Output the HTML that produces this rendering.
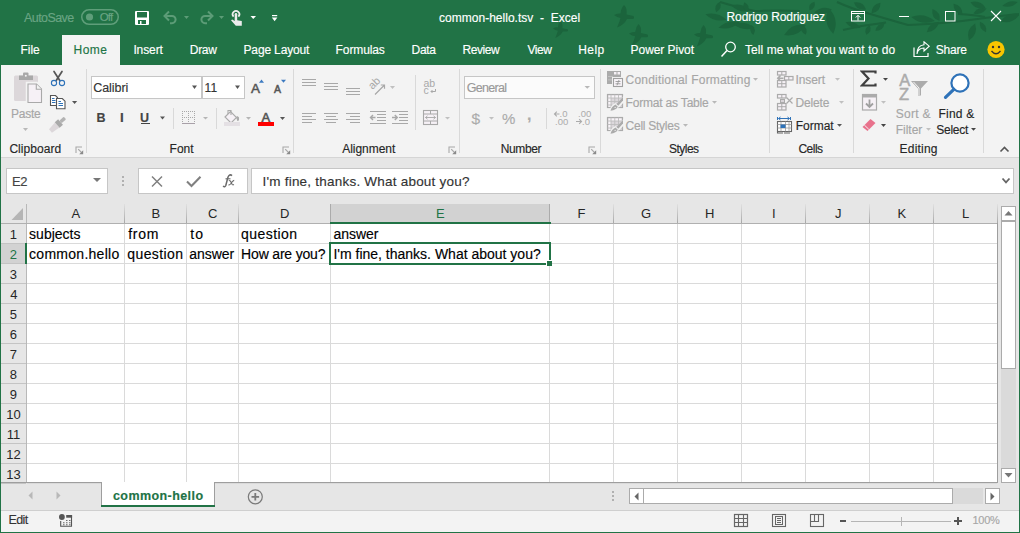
<!DOCTYPE html>
<html><head><meta charset="utf-8"><style>
html,body{margin:0;padding:0;width:1020px;height:533px;overflow:hidden;background:#fff;}
body{position:relative;font-family:"Liberation Sans",sans-serif;}
div,svg{position:absolute;}
.t{white-space:nowrap;-webkit-text-stroke:0.15px currentColor;}
</style></head><body>
<div style="left:0px;top:0px;width:1020px;height:65px;background:#217346;"></div>
<svg style="left:540px;top:0px;" width="479" height="65" viewBox="0 0 479 65"><path d="M0 10 Q3 8 6.5 8.5 Q7 3 10 0 Q13.5 3 12.5 9.5 L19.5 11 Q21 13.5 18.5 14 L13 14 Q10 20 3 22.5 Q5.5 17 6.5 13 Q3 12.5 0 10Z" transform="translate(74 5) scale(1.0)" fill="#1b643c"/><path d="M0 10 Q3 8 6.5 8.5 Q7 3 10 0 Q13.5 3 12.5 9.5 L19.5 11 Q21 13.5 18.5 14 L13 14 Q10 20 3 22.5 Q5.5 17 6.5 13 Q3 12.5 0 10Z" transform="translate(89 24) scale(0.95)" fill="#1b643c"/><path d="M0 10 Q3 8 6.5 8.5 Q7 3 10 0 Q13.5 3 12.5 9.5 L19.5 11 Q21 13.5 18.5 14 L13 14 Q10 20 3 22.5 Q5.5 17 6.5 13 Q3 12.5 0 10Z" transform="translate(154 25) scale(0.95)" fill="#1b643c"/><path d="M0 10 Q3 8 6.5 8.5 Q7 3 10 0 Q13.5 3 12.5 9.5 L19.5 11 Q21 13.5 18.5 14 L13 14 Q10 20 3 22.5 Q5.5 17 6.5 13 Q3 12.5 0 10Z" transform="translate(13 21) scale(0.75)" fill="#1b643c"/><path d="M 180.0 2.0 Q 200.0 8.0 215.0 11.0 Q 240.0 10.0 260.0 11.0" stroke="#1b643c" stroke-width="2" fill="none"/><path d="M 297.0 2.0 Q 310.0 8.0 327.0 13.0 Q 350.0 20.0 368.0 25.0 Q 390.0 24.0 402.0 23.0 Q 425.0 21.0 445.0 18.0 Q 460.0 16.0 479.0 14.0" stroke="#1b643c" stroke-width="2" fill="none"/><path d="M 303.0 30.0 Q 325.0 25.0 346.0 22.6" stroke="#1b643c" stroke-width="2" fill="none"/><path d="M 418.0 14.0 Q 435.0 15.0 445.0 17.0" stroke="#1b643c" stroke-width="2" fill="none"/><path d="M-11.0 0 Q0 -6 11.0 0 Q0 6 -11.0 0Z" transform="translate(176 17) rotate(15)" fill="#1b643c"/><path d="M-11.0 0 Q0 -6 11.0 0 Q0 6 -11.0 0Z" transform="translate(189 25) rotate(-15)" fill="#1b643c"/><path d="M-10.0 0 Q0 -6 10.0 0 Q0 6 -10.0 0Z" transform="translate(201 8) rotate(15)" fill="#1b643c"/><path d="M-5.5 0 Q0 -5 5.5 0 Q0 5 -5.5 0Z" transform="translate(178 7) rotate(-70)" fill="#1b643c"/><path d="M-5.0 0 Q0 -5 5.0 0 Q0 5 -5.0 0Z" transform="translate(206 7) rotate(70)" fill="#1b643c"/><path d="M-11.0 0 Q0 -6 11.0 0 Q0 6 -11.0 0Z" transform="translate(204 26) rotate(10)" fill="#1b643c"/><path d="M-5.0 0 Q0 -4.5 5.0 0 Q0 4.5 -5.0 0Z" transform="translate(212.5 30) rotate(80)" fill="#1b643c"/><path d="M-12.0 0 Q0 -8 12.0 0 Q0 8 -12.0 0Z" transform="translate(255 30) rotate(-25)" fill="#1b643c"/><path d="M-13.0 0 Q0 -9 13.0 0 Q0 9 -13.0 0Z" transform="translate(291 21) rotate(80)" fill="#1b643c"/><path d="M-9.0 0 Q0 -6 9.0 0 Q0 6 -9.0 0Z" transform="translate(283 11) rotate(-10)" fill="#1b643c"/><path d="M-5.0 0 Q0 -5 5.0 0 Q0 5 -5.0 0Z" transform="translate(272 6) rotate(-60)" fill="#1b643c"/><path d="M-7.0 0 Q0 -6 7.0 0 Q0 6 -7.0 0Z" transform="translate(320 6) rotate(30)" fill="#1b643c"/><path d="M-7.0 0 Q0 -6 7.0 0 Q0 6 -7.0 0Z" transform="translate(336 8) rotate(-50)" fill="#1b643c"/><path d="M-8.0 0 Q0 -5 8.0 0 Q0 5 -8.0 0Z" transform="translate(313 25) rotate(20)" fill="#1b643c"/><path d="M-5.0 0 Q0 -5 5.0 0 Q0 5 -5.0 0Z" transform="translate(328 30) rotate(-70)" fill="#1b643c"/><path d="M-6.0 0 Q0 -5 6.0 0 Q0 5 -6.0 0Z" transform="translate(340 27) rotate(-40)" fill="#1b643c"/><path d="M-5.0 0 Q0 -5 5.0 0 Q0 5 -5.0 0Z" transform="translate(264 30) rotate(70)" fill="#1b643c"/><path d="M-12.0 0 Q0 -7 12.0 0 Q0 7 -12.0 0Z" transform="translate(383 19) rotate(10)" fill="#1b643c"/><path d="M-7.0 0 Q0 -6 7.0 0 Q0 6 -7.0 0Z" transform="translate(396 15) rotate(60)" fill="#1b643c"/><path d="M-8.0 0 Q0 -6 8.0 0 Q0 6 -8.0 0Z" transform="translate(393 27) rotate(-40)" fill="#1b643c"/><path d="M-7.0 0 Q0 -6 7.0 0 Q0 6 -7.0 0Z" transform="translate(418 9) rotate(50)" fill="#1b643c"/><path d="M-9.0 0 Q0 -7 9.0 0 Q0 7 -9.0 0Z" transform="translate(432 32) rotate(-70)" fill="#1b643c"/><path d="M-6.0 0 Q0 -5 6.0 0 Q0 5 -6.0 0Z" transform="translate(443 27) rotate(60)" fill="#1b643c"/><path d="M-8.0 0 Q0 -6 8.0 0 Q0 6 -8.0 0Z" transform="translate(438 5) rotate(20)" fill="#1b643c"/><path d="M-7.0 0 Q0 -5 7.0 0 Q0 5 -7.0 0Z" transform="translate(440 11) rotate(-20)" fill="#1b643c"/><path d="M-8.0 0 Q0 -5 8.0 0 Q0 5 -8.0 0Z" transform="translate(470 4) rotate(-15)" fill="#1b643c"/><path d="M-10.0 0 Q0 -7 10.0 0 Q0 7 -10.0 0Z" transform="translate(470 18) rotate(-20)" fill="#1b643c"/></svg>
<div style="left:62px;top:35px;width:58px;height:30px;background:#f3f3f3;"></div>
<div style="left:1px;top:65px;width:1018px;height:92px;background:#f3f3f3;"></div>
<div style="left:1px;top:157px;width:1018px;height:1px;background:#d5d5d5;"></div>
<div style="left:1px;top:158px;width:1018px;height:325px;background:#e6e6e6;"></div>
<div style="left:1px;top:483px;width:1018px;height:27px;background:#e6e6e6;"></div>
<div style="left:1px;top:510px;width:1018px;height:1px;background:#cfcfcf;"></div>
<div style="left:1px;top:511px;width:1018px;height:21px;background:#f3f3f3;"></div>
<div style="left:0px;top:0px;width:1px;height:533px;background:#217346;"></div>
<div style="left:1019px;top:0px;width:1px;height:533px;background:#217346;"></div>
<div style="left:0px;top:532px;width:1020px;height:1px;background:#217346;"></div>
<div class="t" style="left:24.0px;top:12px;font-size:12.5px;line-height:12.5px;color:#6aa584;letter-spacing:-0.57px;">AutoSave</div>
<div class="t" style="left:99.8px;top:12px;font-size:11.5px;line-height:11.5px;color:#6aa584;letter-spacing:-0.90px;">Off</div>
<div class="t" style="left:439.0px;top:12px;font-size:12px;line-height:12px;color:#fff;letter-spacing:0.02px;">common-hello.tsv&nbsp;&nbsp;-&nbsp;&nbsp;Excel</div>
<div class="t" style="left:726.5px;top:11px;font-size:12px;line-height:12px;color:#fff;letter-spacing:-0.09px;">Rodrigo Rodriguez</div>
<div style="left:899px;top:16px;width:10px;height:1px;background:#fff;"></div>
<div class="t" style="left:20.4px;top:44px;font-size:12px;line-height:12px;color:#fff;">File</div>
<div class="t" style="left:73.5px;top:44px;font-size:12px;line-height:12px;color:#217346;letter-spacing:0.50px;">Home</div>
<div class="t" style="left:133.4px;top:44px;font-size:12px;line-height:12px;color:#fff;letter-spacing:-0.10px;">Insert</div>
<div class="t" style="left:189.8px;top:44px;font-size:12px;line-height:12px;color:#fff;letter-spacing:-0.33px;">Draw</div>
<div class="t" style="left:243.5px;top:44px;font-size:12px;line-height:12px;color:#fff;letter-spacing:-0.15px;">Page Layout</div>
<div class="t" style="left:335.6px;top:44px;font-size:12px;line-height:12px;color:#fff;letter-spacing:-0.11px;">Formulas</div>
<div class="t" style="left:411.6px;top:44px;font-size:12px;line-height:12px;color:#fff;letter-spacing:-0.33px;">Data</div>
<div class="t" style="left:462.4px;top:44px;font-size:12px;line-height:12px;color:#fff;letter-spacing:-0.40px;">Review</div>
<div class="t" style="left:527.5px;top:44px;font-size:12px;line-height:12px;color:#fff;letter-spacing:-0.50px;">View</div>
<div class="t" style="left:578.3px;top:44px;font-size:12px;line-height:12px;color:#fff;letter-spacing:0.40px;">Help</div>
<div class="t" style="left:630.6px;top:44px;font-size:12px;line-height:12px;color:#fff;letter-spacing:-0.06px;">Power Pivot</div>
<div class="t" style="left:745.0px;top:44px;font-size:12px;line-height:12px;color:#fff;letter-spacing:0.08px;">Tell me what you want to do</div>
<div class="t" style="left:935.8px;top:44px;font-size:12px;line-height:12px;color:#fff;letter-spacing:-0.25px;">Share</div>
<div style="left:86px;top:69px;width:1px;height:84px;background:#d9d9d9;"></div>
<div style="left:293px;top:69px;width:1px;height:84px;background:#d9d9d9;"></div>
<div style="left:459px;top:69px;width:1px;height:84px;background:#d9d9d9;"></div>
<div style="left:600px;top:69px;width:1px;height:84px;background:#d9d9d9;"></div>
<div style="left:769px;top:69px;width:1px;height:84px;background:#d9d9d9;"></div>
<div style="left:853px;top:69px;width:1px;height:84px;background:#d9d9d9;"></div>
<div style="left:983px;top:69px;width:1px;height:84px;background:#d9d9d9;"></div>
<div style="left:173px;top:108px;width:1px;height:21px;background:#d9d9d9;"></div>
<div style="left:216px;top:108px;width:1px;height:21px;background:#d9d9d9;"></div>
<div style="left:415px;top:75px;width:1px;height:55px;background:#d9d9d9;"></div>
<div style="left:546px;top:108px;width:1px;height:21px;background:#d9d9d9;"></div>
<div class="t" style="left:9.4px;top:143px;font-size:12px;line-height:12px;color:#262626;letter-spacing:0.05px;">Clipboard</div>
<div class="t" style="left:169.6px;top:143px;font-size:12px;line-height:12px;color:#262626;">Font</div>
<div class="t" style="left:342.3px;top:143px;font-size:12px;line-height:12px;color:#262626;letter-spacing:-0.05px;">Alignment</div>
<div class="t" style="left:500.8px;top:143px;font-size:12px;line-height:12px;color:#262626;letter-spacing:-0.40px;">Number</div>
<div class="t" style="left:669.0px;top:143px;font-size:12px;line-height:12px;color:#262626;letter-spacing:-0.52px;">Styles</div>
<div class="t" style="left:798.4px;top:143px;font-size:12px;line-height:12px;color:#262626;letter-spacing:-0.50px;">Cells</div>
<div class="t" style="left:899.6px;top:143px;font-size:12px;line-height:12px;color:#262626;letter-spacing:0.20px;">Editing</div>
<div class="t" style="left:11.0px;top:108px;font-size:12px;line-height:12px;color:#a6a6a6;letter-spacing:-0.25px;">Paste</div>
<div style="left:91px;top:76px;width:111px;height:23px;box-sizing:border-box;border:1px solid #c6c6c6;background:#fff;"></div>
<div style="left:202px;top:76px;width:43px;height:23px;box-sizing:border-box;border:1px solid #c6c6c6;background:#fff;"></div>
<div class="t" style="left:93.3px;top:82px;font-size:12.5px;line-height:12.5px;color:#333;letter-spacing:-0.08px;">Calibri</div>
<div class="t" style="left:204.6px;top:82px;font-size:12px;line-height:12px;color:#333;">11</div>
<div class="t" style="left:251.0px;top:82px;font-size:13.5px;line-height:13.5px;color:#555;-webkit-text-stroke:0.5px #555;">A</div>
<div class="t" style="left:274.0px;top:84px;font-size:10.5px;line-height:10.5px;color:#555;-webkit-text-stroke:0.5px #555;">A</div>
<div class="t" style="left:96.6px;top:112px;font-size:12.5px;line-height:12.5px;color:#444444;font-weight:700;">B</div>
<div class="t" style="left:120.0px;top:111px;font-size:13.5px;line-height:13.5px;color:#444444;font-weight:700;font-family:"Liberation Serif",sans-serif;font-style:italic;">I</div>
<div class="t" style="left:140.0px;top:112px;font-size:12.5px;line-height:12.5px;color:#444444;font-weight:700;">U</div>
<div style="left:141px;top:123px;width:9px;height:1px;background:#444444;"></div>
<div class="t" style="left:261.5px;top:111px;font-size:13px;line-height:13px;color:#555;-webkit-text-stroke:0.6px #555;">A</div>
<div style="left:258px;top:122px;width:16px;height:4px;background:#ff0000;"></div>
<div style="left:302px;top:79px;width:14px;height:1px;background:#a8a8a8;"></div>
<div style="left:302px;top:82px;width:14px;height:1px;background:#a8a8a8;"></div>
<div style="left:302px;top:85px;width:14px;height:1px;background:#a8a8a8;"></div>
<div style="left:324px;top:83px;width:14px;height:1px;background:#a8a8a8;"></div>
<div style="left:324px;top:86px;width:14px;height:1px;background:#a8a8a8;"></div>
<div style="left:324px;top:89px;width:14px;height:1px;background:#a8a8a8;"></div>
<div style="left:346px;top:88px;width:14px;height:1px;background:#a8a8a8;"></div>
<div style="left:346px;top:91px;width:14px;height:1px;background:#a8a8a8;"></div>
<div style="left:346px;top:94px;width:14px;height:1px;background:#a8a8a8;"></div>
<div style="left:302px;top:113px;width:14px;height:1px;background:#a8a8a8;"></div>
<div style="left:302px;top:116px;width:10px;height:1px;background:#a8a8a8;"></div>
<div style="left:302px;top:119px;width:14px;height:1px;background:#a8a8a8;"></div>
<div style="left:302px;top:122px;width:10px;height:1px;background:#a8a8a8;"></div>
<div style="left:324.0px;top:113px;width:14px;height:1px;background:#a8a8a8;"></div>
<div style="left:326.0px;top:116px;width:10px;height:1px;background:#a8a8a8;"></div>
<div style="left:324.0px;top:119px;width:14px;height:1px;background:#a8a8a8;"></div>
<div style="left:326.0px;top:122px;width:10px;height:1px;background:#a8a8a8;"></div>
<div style="left:346px;top:113px;width:14px;height:1px;background:#a8a8a8;"></div>
<div style="left:350px;top:116px;width:10px;height:1px;background:#a8a8a8;"></div>
<div style="left:346px;top:119px;width:14px;height:1px;background:#a8a8a8;"></div>
<div style="left:350px;top:122px;width:10px;height:1px;background:#a8a8a8;"></div>
<div style="left:464px;top:76px;width:131px;height:23px;box-sizing:border-box;border:1px solid #c6c6c6;background:#fbfbfb;"></div>
<div class="t" style="left:466.8px;top:82px;font-size:12.5px;line-height:12.5px;color:#999;letter-spacing:-0.72px;">General</div>
<div class="t" style="left:471.5px;top:111px;font-size:15.5px;line-height:15.5px;color:#ababab;">$</div>
<div class="t" style="left:502.0px;top:111px;font-size:15px;line-height:15px;color:#ababab;">%</div>
<div class="t" style="left:527.0px;top:107px;font-size:16px;line-height:16px;color:#ababab;font-weight:700;">&#x2c;</div>
<div class="t" style="left:625.6px;top:74px;font-size:12px;line-height:12px;color:#a6a6a6;letter-spacing:0.19px;">Conditional Formatting</div>
<div class="t" style="left:625.6px;top:97px;font-size:12px;line-height:12px;color:#a6a6a6;letter-spacing:-0.19px;">Format as Table</div>
<div class="t" style="left:625.6px;top:120px;font-size:12px;line-height:12px;color:#a6a6a6;letter-spacing:-0.26px;">Cell Styles</div>
<div class="t" style="left:795.4px;top:74px;font-size:12px;line-height:12px;color:#a6a6a6;letter-spacing:-0.08px;">Insert</div>
<div class="t" style="left:795.4px;top:97px;font-size:12px;line-height:12px;color:#a6a6a6;letter-spacing:-0.12px;">Delete</div>
<div class="t" style="left:795.7px;top:120px;font-size:12px;line-height:12px;color:#262626;">Format</div>
<div class="t" style="left:899.3px;top:72px;font-size:16.5px;line-height:16.5px;color:#ababab;-webkit-text-stroke:0.5px #ababab;">A</div>
<div class="t" style="left:898.9px;top:86px;font-size:16.5px;line-height:16.5px;color:#ababab;-webkit-text-stroke:0.5px #ababab;">Z</div>
<div class="t" style="left:895.7px;top:108px;font-size:12px;line-height:12px;color:#a6a6a6;letter-spacing:0.30px;">Sort &amp;</div>
<div class="t" style="left:895.7px;top:124px;font-size:12px;line-height:12px;color:#a6a6a6;">Filter</div>
<div class="t" style="left:938.4px;top:108px;font-size:12px;line-height:12px;color:#262626;letter-spacing:0.26px;">Find &amp;</div>
<div class="t" style="left:936.3px;top:124px;font-size:12px;line-height:12px;color:#262626;letter-spacing:-0.26px;">Select</div>
<div style="left:6px;top:168px;width:102px;height:26px;box-sizing:border-box;border:1px solid #c6c6c6;background:#fff;"></div>
<div class="t" style="left:12.0px;top:175px;font-size:13px;line-height:13px;color:#444;letter-spacing:-0.50px;">E2</div>
<div style="left:122px;top:176px;width:2px;height:2px;background:#b0b0b0;"></div>
<div style="left:122px;top:180px;width:2px;height:2px;background:#b0b0b0;"></div>
<div style="left:122px;top:184px;width:2px;height:2px;background:#b0b0b0;"></div>
<div style="left:138px;top:168px;width:110px;height:26px;box-sizing:border-box;border:1px solid #c6c6c6;background:#fff;"></div>
<div style="left:251px;top:168px;width:763px;height:26px;box-sizing:border-box;border:1px solid #c6c6c6;background:#fff;"></div>
<div class="t" style="left:262.5px;top:175px;font-size:13.5px;line-height:13.5px;color:#333;letter-spacing:0.22px;">I'm fine, thanks. What about you?</div>
<div style="left:27px;top:224px;width:970px;height:259px;background:#fff;"></div>
<div style="left:27px;top:243px;width:970px;height:1px;background:#dadada;"></div>
<div style="left:27px;top:263px;width:970px;height:1px;background:#dadada;"></div>
<div style="left:27px;top:283px;width:970px;height:1px;background:#dadada;"></div>
<div style="left:27px;top:303px;width:970px;height:1px;background:#dadada;"></div>
<div style="left:27px;top:323px;width:970px;height:1px;background:#dadada;"></div>
<div style="left:27px;top:343px;width:970px;height:1px;background:#dadada;"></div>
<div style="left:27px;top:363px;width:970px;height:1px;background:#dadada;"></div>
<div style="left:27px;top:383px;width:970px;height:1px;background:#dadada;"></div>
<div style="left:27px;top:403px;width:970px;height:1px;background:#dadada;"></div>
<div style="left:27px;top:423px;width:970px;height:1px;background:#dadada;"></div>
<div style="left:27px;top:443px;width:970px;height:1px;background:#dadada;"></div>
<div style="left:27px;top:463px;width:970px;height:1px;background:#dadada;"></div>
<div style="left:27px;top:483px;width:970px;height:1px;background:#dadada;"></div>
<div style="left:124px;top:224px;width:1px;height:259px;background:#dadada;"></div>
<div style="left:186px;top:224px;width:1px;height:259px;background:#dadada;"></div>
<div style="left:238px;top:224px;width:1px;height:259px;background:#dadada;"></div>
<div style="left:330px;top:224px;width:1px;height:259px;background:#dadada;"></div>
<div style="left:549px;top:224px;width:1px;height:259px;background:#dadada;"></div>
<div style="left:613px;top:224px;width:1px;height:259px;background:#dadada;"></div>
<div style="left:677px;top:224px;width:1px;height:259px;background:#dadada;"></div>
<div style="left:741px;top:224px;width:1px;height:259px;background:#dadada;"></div>
<div style="left:805px;top:224px;width:1px;height:259px;background:#dadada;"></div>
<div style="left:869px;top:224px;width:1px;height:259px;background:#dadada;"></div>
<div style="left:933px;top:224px;width:1px;height:259px;background:#dadada;"></div>
<div style="left:124px;top:204px;width:1px;height:19px;background:linear-gradient(#e0e0e0,#a8a8a8);"></div>
<div style="left:186px;top:204px;width:1px;height:19px;background:linear-gradient(#e0e0e0,#a8a8a8);"></div>
<div style="left:238px;top:204px;width:1px;height:19px;background:linear-gradient(#e0e0e0,#a8a8a8);"></div>
<div style="left:330px;top:204px;width:1px;height:19px;background:linear-gradient(#e0e0e0,#a8a8a8);"></div>
<div style="left:549px;top:204px;width:1px;height:19px;background:linear-gradient(#e0e0e0,#a8a8a8);"></div>
<div style="left:613px;top:204px;width:1px;height:19px;background:linear-gradient(#e0e0e0,#a8a8a8);"></div>
<div style="left:677px;top:204px;width:1px;height:19px;background:linear-gradient(#e0e0e0,#a8a8a8);"></div>
<div style="left:741px;top:204px;width:1px;height:19px;background:linear-gradient(#e0e0e0,#a8a8a8);"></div>
<div style="left:805px;top:204px;width:1px;height:19px;background:linear-gradient(#e0e0e0,#a8a8a8);"></div>
<div style="left:869px;top:204px;width:1px;height:19px;background:linear-gradient(#e0e0e0,#a8a8a8);"></div>
<div style="left:933px;top:204px;width:1px;height:19px;background:linear-gradient(#e0e0e0,#a8a8a8);"></div>
<div style="left:997px;top:204px;width:1px;height:19px;background:linear-gradient(#e0e0e0,#a8a8a8);"></div>
<div style="left:26px;top:204px;width:1px;height:279px;background:#b8b8b8;"></div>
<div style="left:1px;top:223px;width:997px;height:1px;background:#b0b0b0;"></div>
<div style="left:997px;top:223px;width:1px;height:260px;background:#9e9e9e;"></div>
<div style="left:1px;top:482px;width:101px;height:1px;background:#9e9e9e;"></div>
<div style="left:214px;top:482px;width:784px;height:1px;background:#9e9e9e;"></div>
<div style="left:1px;top:243px;width:25px;height:1px;background:#c4c4c4;"></div>
<div style="left:1px;top:263px;width:25px;height:1px;background:#c4c4c4;"></div>
<div style="left:1px;top:283px;width:25px;height:1px;background:#c4c4c4;"></div>
<div style="left:1px;top:303px;width:25px;height:1px;background:#c4c4c4;"></div>
<div style="left:1px;top:323px;width:25px;height:1px;background:#c4c4c4;"></div>
<div style="left:1px;top:343px;width:25px;height:1px;background:#c4c4c4;"></div>
<div style="left:1px;top:363px;width:25px;height:1px;background:#c4c4c4;"></div>
<div style="left:1px;top:383px;width:25px;height:1px;background:#c4c4c4;"></div>
<div style="left:1px;top:403px;width:25px;height:1px;background:#c4c4c4;"></div>
<div style="left:1px;top:423px;width:25px;height:1px;background:#c4c4c4;"></div>
<div style="left:1px;top:443px;width:25px;height:1px;background:#c4c4c4;"></div>
<div style="left:1px;top:463px;width:25px;height:1px;background:#c4c4c4;"></div>
<div style="left:1px;top:483px;width:25px;height:1px;background:#c4c4c4;"></div>
<div style="left:331px;top:204px;width:218px;height:18px;background:#d2d2d2;"></div>
<div style="left:330px;top:204px;width:1px;height:18px;background:#ababab;"></div>
<div style="left:549px;top:204px;width:1px;height:18px;background:#ababab;"></div>
<div style="left:330px;top:222px;width:221px;height:2px;background:#217346;"></div>
<div style="left:1px;top:244px;width:25px;height:19px;background:#d2d2d2;"></div>
<div style="left:25px;top:243px;width:2px;height:21px;background:#217346;"></div>
<div class="t" style="left:71.6px;top:207px;font-size:13px;line-height:13px;color:#262626;-webkit-text-stroke:0;">A</div>
<div class="t" style="left:151.6px;top:207px;font-size:13px;line-height:13px;color:#262626;-webkit-text-stroke:0;">B</div>
<div class="t" style="left:208.1px;top:207px;font-size:13px;line-height:13px;color:#262626;-webkit-text-stroke:0;">C</div>
<div class="t" style="left:280.1px;top:207px;font-size:13px;line-height:13px;color:#262626;-webkit-text-stroke:0;">D</div>
<div class="t" style="left:436.1px;top:207px;font-size:13px;line-height:13px;color:#217346;-webkit-text-stroke:0;">E</div>
<div class="t" style="left:577.6px;top:207px;font-size:13px;line-height:13px;color:#262626;-webkit-text-stroke:0;">F</div>
<div class="t" style="left:641.1px;top:207px;font-size:13px;line-height:13px;color:#262626;-webkit-text-stroke:0;">G</div>
<div class="t" style="left:705.1px;top:207px;font-size:13px;line-height:13px;color:#262626;-webkit-text-stroke:0;">H</div>
<div class="t" style="left:772.1px;top:207px;font-size:13px;line-height:13px;color:#262626;-webkit-text-stroke:0;">I</div>
<div class="t" style="left:835.1px;top:207px;font-size:13px;line-height:13px;color:#262626;-webkit-text-stroke:0;">J</div>
<div class="t" style="left:897.6px;top:207px;font-size:13px;line-height:13px;color:#262626;-webkit-text-stroke:0;">K</div>
<div class="t" style="left:962.1px;top:207px;font-size:13px;line-height:13px;color:#262626;-webkit-text-stroke:0;">L</div>
<div class="t" style="left:9.8px;top:228px;font-size:13px;line-height:13px;color:#262626;-webkit-text-stroke:0;">1</div>
<div class="t" style="left:9.8px;top:248px;font-size:13px;line-height:13px;color:#217346;-webkit-text-stroke:0;">2</div>
<div class="t" style="left:9.8px;top:268px;font-size:13px;line-height:13px;color:#262626;-webkit-text-stroke:0;">3</div>
<div class="t" style="left:10.3px;top:288px;font-size:13px;line-height:13px;color:#262626;-webkit-text-stroke:0;">4</div>
<div class="t" style="left:9.8px;top:308px;font-size:13px;line-height:13px;color:#262626;-webkit-text-stroke:0;">5</div>
<div class="t" style="left:9.8px;top:328px;font-size:13px;line-height:13px;color:#262626;-webkit-text-stroke:0;">6</div>
<div class="t" style="left:9.8px;top:348px;font-size:13px;line-height:13px;color:#262626;-webkit-text-stroke:0;">7</div>
<div class="t" style="left:9.8px;top:368px;font-size:13px;line-height:13px;color:#262626;-webkit-text-stroke:0;">8</div>
<div class="t" style="left:9.8px;top:388px;font-size:13px;line-height:13px;color:#262626;-webkit-text-stroke:0;">9</div>
<div class="t" style="left:6.3px;top:408px;font-size:13px;line-height:13px;color:#262626;-webkit-text-stroke:0;">10</div>
<div class="t" style="left:6.8px;top:428px;font-size:13px;line-height:13px;color:#262626;-webkit-text-stroke:0;">11</div>
<div class="t" style="left:6.3px;top:448px;font-size:13px;line-height:13px;color:#262626;-webkit-text-stroke:0;">12</div>
<div class="t" style="left:6.3px;top:468px;font-size:13px;line-height:13px;color:#262626;-webkit-text-stroke:0;">13</div>
<div class="t" style="left:29.1px;top:227px;font-size:14px;line-height:14px;color:#000;">subjects</div>
<div class="t" style="left:128.3px;top:227px;font-size:14px;line-height:14px;color:#000;letter-spacing:0.67px;">from</div>
<div class="t" style="left:190.2px;top:227px;font-size:14px;line-height:14px;color:#000;letter-spacing:1.20px;">to</div>
<div class="t" style="left:241.1px;top:227px;font-size:14px;line-height:14px;color:#000;letter-spacing:0.43px;">question</div>
<div class="t" style="left:333.4px;top:227px;font-size:14px;line-height:14px;color:#000;">answer</div>
<div class="t" style="left:29.1px;top:247px;font-size:14px;line-height:14px;color:#000;letter-spacing:0.27px;">common.hello</div>
<div class="t" style="left:127.3px;top:247px;font-size:14px;line-height:14px;color:#000;letter-spacing:0.40px;">question</div>
<div class="t" style="left:189.2px;top:247px;font-size:14px;line-height:14px;color:#000;letter-spacing:-0.02px;">answer</div>
<div class="t" style="left:241.1px;top:247px;font-size:14px;line-height:14px;color:#000;letter-spacing:-0.18px;">How are you?</div>
<div class="t" style="left:333.4px;top:247px;font-size:14px;line-height:14px;color:#000;">I'm fine, thanks. What about you?</div>
<div style="left:329px;top:242px;width:222px;height:23px;box-sizing:border-box;border:2px solid #217346;background:transparent;"></div>
<div style="left:546px;top:260px;width:6px;height:6px;background:#fff;"></div>
<div style="left:547px;top:261px;width:5px;height:5px;background:#217346;"></div>
<div style="left:998px;top:204px;width:21px;height:279px;background:#e6e6e6;"></div>
<div style="left:1001px;top:221px;width:15px;height:247px;background:#dadada;"></div>
<div style="left:1001px;top:206px;width:15px;height:15px;box-sizing:border-box;border:1px solid #ababab;background:#fff;"></div>
<div style="left:1001px;top:221px;width:15px;height:148px;box-sizing:border-box;border:1px solid #ababab;background:#fff;"></div>
<div style="left:1001px;top:468px;width:15px;height:15px;box-sizing:border-box;border:1px solid #ababab;background:#fff;"></div>
<div style="left:101px;top:482px;width:1px;height:25px;background:#9e9e9e;"></div>
<div style="left:214px;top:482px;width:1px;height:25px;background:#9e9e9e;"></div>
<div style="left:102px;top:482px;width:112px;height:23px;background:#fff;"></div>
<div style="left:101px;top:505px;width:114px;height:2px;background:#217346;"></div>
<div class="t" style="left:113.0px;top:490px;font-size:12.5px;line-height:12.5px;color:#217346;font-weight:700;letter-spacing:0.42px;">common-hello</div>
<div style="left:612px;top:491px;width:2px;height:2px;background:#b0b0b0;"></div>
<div style="left:612px;top:495px;width:2px;height:2px;background:#b0b0b0;"></div>
<div style="left:612px;top:499px;width:2px;height:2px;background:#b0b0b0;"></div>
<div style="left:644px;top:488px;width:339px;height:16px;background:#dadada;"></div>
<div style="left:629px;top:488px;width:15px;height:16px;box-sizing:border-box;border:1px solid #ababab;background:#fff;"></div>
<div style="left:643px;top:488px;width:310px;height:16px;box-sizing:border-box;border:1px solid #ababab;background:#fff;"></div>
<div style="left:985px;top:488px;width:15px;height:16px;box-sizing:border-box;border:1px solid #ababab;background:#fff;"></div>
<div class="t" style="left:8.6px;top:514px;font-size:12.5px;line-height:12.5px;color:#333;letter-spacing:-0.67px;">Edit</div>
<div style="left:840px;top:520px;width:6px;height:2px;background:#555;"></div>
<div style="left:851px;top:521px;width:100px;height:1px;background:#b5b5b5;"></div>
<div style="left:901px;top:517px;width:1px;height:9px;background:#b5b5b5;"></div>
<div style="left:954px;top:520px;width:8px;height:2px;background:#555;"></div>
<div style="left:957px;top:517px;width:2px;height:8px;background:#555;"></div>
<div class="t" style="left:972.5px;top:515px;font-size:11px;line-height:11px;color:#a6a6a6;letter-spacing:-0.27px;">100%</div>
<svg style="left:81px;top:9px" width="38" height="16"><rect x="0.75" y="0.75" width="36.5" height="14.5" rx="7.25" fill="none" stroke="#5f9e7a" stroke-width="1.5"/><circle cx="8.5" cy="8" r="3.6" fill="#5f9e7a"/></svg>
<svg style="left:134px;top:10px" width="16" height="16"><rect x="1" y="1" width="14" height="14" rx="1" fill="#fff"/><rect x="3" y="2" width="10" height="5.5" fill="#217346"/><rect x="4" y="10" width="8" height="4" fill="#217346"/><rect x="6" y="11" width="1.5" height="3" fill="#fff"/></svg>
<svg style="left:162px;top:9px" width="30" height="18"><path d="M3 7 H10 A3.6 3.6 0 0 1 10 14.2 H8" fill="none" stroke="#5c9c77" stroke-width="2"/><path d="M7 2.5 L2.5 7 L7 11.5" fill="none" stroke="#5c9c77" stroke-width="2"/><polygon points="22,7 27,7 24.5,10" fill="#5c9c77"/></svg>
<svg style="left:197px;top:9px" width="30" height="18"><path d="M15 7 H8 A3.6 3.6 0 0 0 8 14.2 H10" fill="none" stroke="#5c9c77" stroke-width="2"/><path d="M11 2.5 L15.5 7 L11 11.5" fill="none" stroke="#5c9c77" stroke-width="2"/><polygon points="22,7 27,7 24.5,10" fill="#5c9c77"/></svg>
<svg style="left:229px;top:9px" width="30" height="18"><path d="M4.6 7.6 A3.3 3.3 0 1 1 9.4 7.6" fill="none" stroke="#ececec" stroke-width="1.8"/><rect x="5.7" y="4" width="2.5" height="9" rx="1.2" fill="#ececec"/><polygon points="2,11.2 3.2,10.6 5.7,12 8,11.2 12.8,12 12.8,16.8 6.8,16.8" fill="#ececec"/><polygon points="21.5,7 27,7 24.25,10" fill="#fff"/></svg>
<svg style="left:270px;top:13px" width="9" height="10"><rect x="2" y="2" width="5.2" height="1.2" fill="#fff"/><polygon points="1.8,4.5 7.4,4.5 4.6000000000000005,8.2" fill="#fff"/></svg>
<svg style="left:850px;top:10px" width="16" height="12"><rect x="1.5" y="1.5" width="13" height="9.5" fill="none" stroke="#fff" stroke-width="1"/><line x1="1.5" y1="3.5" x2="14.5" y2="3.5" stroke="#fff"/><path d="M8 10.5 V5.5 M5.8 7.5 L8 5.3 L10.2 7.5" stroke="#fff" fill="none"/></svg>
<svg style="left:944px;top:10px" width="12" height="12"><rect x="1.5" y="1.5" width="9.5" height="9.5" fill="none" stroke="#fff"/></svg>
<svg style="left:990px;top:10px" width="12" height="12"><path d="M1 1 L11 11 M11 1 L1 11" stroke="#fff" stroke-width="1.1"/></svg>
<svg style="left:720px;top:41px" width="17" height="17"><circle cx="10.5" cy="6" r="4.8" fill="none" stroke="#fff" stroke-width="1.3"/><line x1="7" y1="9.5" x2="1.5" y2="15.5" stroke="#fff" stroke-width="1.5"/></svg>
<svg style="left:912px;top:41px" width="19" height="17"><path d="M2 6.5 V15.5 H16 V12" fill="none" stroke="#fff" stroke-width="1.2"/><path d="M5 13 Q6 7 12 7 V10 L17.2 5.2 L12 0.8 V3.8 Q5 4.5 5 13 Z" fill="none" stroke="#fff" stroke-width="1.1"/></svg>
<svg style="left:986px;top:40px" width="20" height="19"><circle cx="10" cy="9.5" r="8.6" fill="#f8c500"/><circle cx="7" cy="7" r="1.2" fill="#333"/><circle cx="13" cy="7" r="1.2" fill="#333"/><path d="M5.5 11 Q10 16.5 14.5 11" fill="none" stroke="#333" stroke-width="1.3"/></svg>
<svg style="left:75px;top:145.5px" width="9" height="9"><path d="M1 7 V1 H7" fill="none" stroke="#a8a8a8" stroke-width="1.1"/><path d="M3.2 3.2 L6.5 6.5" stroke="#a8a8a8" stroke-width="1.1"/><polygon points="8.2,4.2 8.2,8.2 4.2,8.2" fill="#8a8a8a"/></svg>
<svg style="left:282px;top:145.5px" width="9" height="9"><path d="M1 7 V1 H7" fill="none" stroke="#a8a8a8" stroke-width="1.1"/><path d="M3.2 3.2 L6.5 6.5" stroke="#a8a8a8" stroke-width="1.1"/><polygon points="8.2,4.2 8.2,8.2 4.2,8.2" fill="#8a8a8a"/></svg>
<svg style="left:448px;top:145.5px" width="9" height="9"><path d="M1 7 V1 H7" fill="none" stroke="#a8a8a8" stroke-width="1.1"/><path d="M3.2 3.2 L6.5 6.5" stroke="#a8a8a8" stroke-width="1.1"/><polygon points="8.2,4.2 8.2,8.2 4.2,8.2" fill="#8a8a8a"/></svg>
<svg style="left:588px;top:145.5px" width="9" height="9"><path d="M1 7 V1 H7" fill="none" stroke="#a8a8a8" stroke-width="1.1"/><path d="M3.2 3.2 L6.5 6.5" stroke="#a8a8a8" stroke-width="1.1"/><polygon points="8.2,4.2 8.2,8.2 4.2,8.2" fill="#8a8a8a"/></svg>
<svg style="left:12px;top:71px" width="32" height="34">
<rect x="2" y="4.5" width="24" height="25.5" rx="1.5" fill="#dcd7da"/>
<rect x="7" y="4.5" width="14" height="4.5" fill="#a9a9a9"/>
<rect x="11" y="1.5" width="5.5" height="4" rx="1" fill="#a9a9a9"/><circle cx="13.8" cy="4.8" r="1" fill="#f3f3f3"/>
<path d="M15 12 H24.8 L30.5 17.8 V32.5 H15 Z" fill="#f3f3f3" stroke="#f3f3f3" stroke-width="2.5"/>
<path d="M16 13 H24.5 L29.5 18 V31.5 H16 Z" fill="#f6f1f6" stroke="#a9a9a9" stroke-width="1.1"/>
<path d="M24.3 13 V18.2 H29.5" fill="#f3f3f3" stroke="#a9a9a9" stroke-width="1.1"/>
</svg>
<svg style="left:22px;top:127px" width="8" height="5"><polygon points="1,1 6,1 3.5,4" fill="#b8b8b8"/></svg>
<svg style="left:49px;top:69px" width="18" height="19">
<path d="M5 2.5 L10.8 11.5 M13 2.5 L7.2 11.5" stroke="#555" stroke-width="1.7" stroke-linecap="round"/>
<circle cx="5" cy="14" r="2.6" fill="#f3f3f3" stroke="#2e72b8" stroke-width="1.1"/>
<circle cx="13" cy="14" r="2.6" fill="#f3f3f3" stroke="#2e72b8" stroke-width="1.1"/>
</svg>
<svg style="left:49px;top:94px" width="18" height="16">
<path d="M1.5 1.5 H6.5 L8.5 3.5 V11.5 H1.5 Z" fill="#fff" stroke="#555" stroke-width="1.1"/>
<path d="M3 4.5 H5.5 M3 6.5 H6.5 M3 8.5 H6.5" stroke="#2e72b8" stroke-width="1"/>
<path d="M7.5 4.5 H13.3 L16 7.2 V14.8 H7.5 Z" fill="#fff" stroke="#555" stroke-width="1.1"/>
<path d="M9.5 7.5 H12 M9.5 9.5 H14 M9.5 11.5 H14" stroke="#2e72b8" stroke-width="1"/>
</svg>
<svg style="left:71px;top:100px" width="8" height="5"><polygon points="1,1 6.2,1 3.6,4" fill="#555"/></svg>
<svg style="left:48px;top:114px" width="20" height="20">
<g transform="translate(2.5 17) rotate(-42)">
<polygon points="0,-2.2 9,-3.4 9,3.4 0,2.2" fill="#dcd7da"/>
<rect x="9" y="-3.6" width="4.5" height="7.2" fill="#a9a9a9"/>
<rect x="13.5" y="-1.7" width="6" height="3.4" rx="1" fill="#b3b3b3"/>
</g>
</svg>
<svg style="left:191px;top:85px" width="8" height="5"><polygon points="1,0.5 6,0.5 3.5,4" fill="#555"/></svg>
<svg style="left:234px;top:85px" width="8" height="5"><polygon points="1,0.5 6,0.5 3.5,4" fill="#555"/></svg>
<svg style="left:258px;top:79px" width="8" height="5"><polygon points="1,3.8 6,3.8 3.5,0.5" fill="#3c7ac0"/></svg>
<svg style="left:280px;top:79px" width="8" height="5"><polygon points="1,0.8 6,0.8 3.5,3.8" fill="#3c7ac0"/></svg>
<svg style="left:159px;top:116px" width="8" height="5"><polygon points="1,0.5 6,0.5 3.5,3.5" fill="#555"/></svg>
<svg style="left:182px;top:111px" width="14" height="14"><rect x="0" y="0" width="1" height="1" fill="#a8a8a8"/><rect x="2" y="0" width="1" height="1" fill="#a8a8a8"/><rect x="4" y="0" width="1" height="1" fill="#a8a8a8"/><rect x="6" y="0" width="1" height="1" fill="#a8a8a8"/><rect x="8" y="0" width="1" height="1" fill="#a8a8a8"/><rect x="10" y="0" width="1" height="1" fill="#a8a8a8"/><rect x="12" y="0" width="1" height="1" fill="#a8a8a8"/><rect x="0" y="2" width="1" height="1" fill="#a8a8a8"/><rect x="6" y="2" width="1" height="1" fill="#a8a8a8"/><rect x="12" y="2" width="1" height="1" fill="#a8a8a8"/><rect x="0" y="4" width="1" height="1" fill="#a8a8a8"/><rect x="6" y="4" width="1" height="1" fill="#a8a8a8"/><rect x="12" y="4" width="1" height="1" fill="#a8a8a8"/><rect x="0" y="6" width="1" height="1" fill="#a8a8a8"/><rect x="2" y="6" width="1" height="1" fill="#a8a8a8"/><rect x="4" y="6" width="1" height="1" fill="#a8a8a8"/><rect x="6" y="6" width="1" height="1" fill="#a8a8a8"/><rect x="8" y="6" width="1" height="1" fill="#a8a8a8"/><rect x="10" y="6" width="1" height="1" fill="#a8a8a8"/><rect x="12" y="6" width="1" height="1" fill="#a8a8a8"/><rect x="0" y="8" width="1" height="1" fill="#a8a8a8"/><rect x="6" y="8" width="1" height="1" fill="#a8a8a8"/><rect x="12" y="8" width="1" height="1" fill="#a8a8a8"/><rect x="0" y="10" width="1" height="1" fill="#a8a8a8"/><rect x="6" y="10" width="1" height="1" fill="#a8a8a8"/><rect x="12" y="10" width="1" height="1" fill="#a8a8a8"/><rect x="0" y="12" width="13" height="1" fill="#a8a0a8"/></svg>
<svg style="left:202px;top:116px" width="8" height="5"><polygon points="1,1 6,1 3.5,3.5" fill="#b5b5b5"/></svg>
<svg style="left:223px;top:109px" width="19" height="18">
<path d="M2 8 L7.5 2.5 L13.5 8.5 L8 14 Z" fill="#f6f1f6" stroke="#ababab" stroke-width="1.1"/>
<path d="M5 5 V1.5 H8 V6" fill="none" stroke="#ababab" stroke-width="1.1"/>
<path d="M13 8.5 Q16 6 15.5 11 L14.5 12" fill="#ababab" stroke="#ababab"/>
<rect x="1" y="13" width="16" height="4" fill="#e4e0e4"/>
</svg>
<svg style="left:245px;top:116px" width="8" height="5"><polygon points="1,1 6,1 3.5,3.8" fill="#b5b5b5"/></svg>
<svg style="left:279px;top:116px" width="8" height="5"><polygon points="1,1 6,1 3.5,4" fill="#555"/></svg>
<svg style="left:369px;top:77px" width="28" height="19">
<text x="0" y="0" transform="translate(3.5 13) rotate(-45)" font-family="Liberation Sans" font-size="11" fill="#a8a8a8">ab</text>
<path d="M6 17.5 L15.5 8 M11.8 8 H15.5 V11.7" fill="none" stroke="#a8a8a8" stroke-width="1.2"/>
<polygon points="21,9 26,9 23.5,12" fill="#c0c0c0"/>
</svg>
<svg style="left:369px;top:110px" width="18" height="15">
<rect x="1" y="1" width="16" height="1" fill="#a8a8a8"/><rect x="8" y="4" width="9" height="1" fill="#a8a8a8"/><rect x="8" y="7" width="9" height="1" fill="#a8a8a8"/><rect x="8" y="10" width="9" height="1" fill="#a8a8a8"/><rect x="1" y="13" width="16" height="1" fill="#a8a8a8"/>
<path d="M6.5 7.5 H1.5 M4 5 L1.5 7.5 L4 10" fill="none" stroke="#a8a8a8" stroke-width="1.4"/>
</svg>
<svg style="left:391px;top:110px" width="18" height="15">
<rect x="1" y="1" width="16" height="1" fill="#a8a8a8"/><rect x="8" y="4" width="9" height="1" fill="#a8a8a8"/><rect x="8" y="7" width="9" height="1" fill="#a8a8a8"/><rect x="8" y="10" width="9" height="1" fill="#a8a8a8"/><rect x="1" y="13" width="16" height="1" fill="#a8a8a8"/>
<path d="M1 7.5 H6 M3.8 5 L6.3 7.5 L3.8 10" fill="none" stroke="#a8a8a8" stroke-width="1.4"/>
</svg>
<svg style="left:422px;top:78px" width="18" height="18">
<text x="1.5" y="8.5" font-family="Liberation Sans" font-size="10.5" fill="#a8a8a8">ab</text>
<text x="1.5" y="16" font-family="Liberation Sans" font-size="10.5" fill="#a8a8a8">c</text>
<path d="M13.5 11 V13.5 H9 M10.5 12 L9 13.5 L10.5 15" fill="none" stroke="#a8a8a8" stroke-width="1"/>
</svg>
<svg style="left:422px;top:109px" width="30" height="17">
<rect x="1.5" y="1.5" width="14" height="14" fill="#f6f1f6" stroke="#a8a8a8" stroke-width="1.1"/>
<path d="M1.5 5 H15.5 M1.5 12 H15.5 M8.5 1.5 V5 M8.5 12 V15.5" stroke="#a8a8a8" stroke-width="1"/>
<path d="M3.5 8.5 H13.5 M5.5 6.8 L3.5 8.5 L5.5 10.2 M11.5 6.8 L13.5 8.5 L11.5 10.2" fill="none" stroke="#a8a8a8" stroke-width="0.9"/>
<polygon points="23,8 28,8 25.5,10.5" fill="#c0c0c0"/>
</svg>
<svg style="left:584px;top:85px" width="8" height="5"><polygon points="0.5,1 6,1 3.25,3.8" fill="#b8b8b8"/></svg>
<svg style="left:488px;top:116px" width="8" height="5"><polygon points="1,1 6,1 3.5,3.8" fill="#c0c0c0"/></svg>
<svg style="left:553px;top:109px" width="40" height="17">
<text x="6.5" y="8" font-family="Liberation Sans" font-size="9.5" fill="#ababab">.0</text>
<text x="2" y="15.5" font-family="Liberation Sans" font-size="9.5" fill="#ababab">.00</text>
<path d="M1.5 5 H6.5 M3.8 2.7 L1.5 5 L3.8 7.3" fill="none" stroke="#ababab" stroke-width="1.1"/>
<text x="25" y="8" font-family="Liberation Sans" font-size="9.5" fill="#ababab">.00</text>
<text x="29" y="15.5" font-family="Liberation Sans" font-size="9.5" fill="#ababab">.0</text>
<path d="M23 12.5 H28.5 M26.2 10.2 L28.5 12.5 L26.2 14.8" fill="none" stroke="#ababab" stroke-width="1.1"/>
</svg>
<svg style="left:606px;top:70px" width="19" height="18">
<rect x="1" y="1" width="14" height="13" fill="#ababab"/>
<rect x="8" y="2" width="2.5" height="2.5" fill="#f6f1f6"/><rect x="11.5" y="2" width="2.5" height="2.5" fill="#f6f1f6"/>
<rect x="2" y="6" width="5" height="0.8" fill="#c8c8c8"/><rect x="2" y="9.5" width="5" height="0.8" fill="#c8c8c8"/>
<rect x="6" y="7" width="12" height="11" fill="#f3f3f3"/>
<rect x="7.5" y="8.5" width="9" height="8" fill="#f8f4f8" stroke="#a0a0a0" stroke-width="1.1"/>
<path d="M9.5 11.5 H14.5 M9.5 13.8 H14.5 M13 10 L11 15.3" stroke="#999" stroke-width="0.9"/>
</svg>
<svg style="left:606px;top:93px" width="19" height="19">
<rect x="1.5" y="1.5" width="15" height="13" fill="#dcd8dc" stroke="#ababab" stroke-width="1.2"/>
<rect x="2.5" y="2.5" width="13" height="2.5" fill="#f8f4f8"/>
<rect x="2.5" y="5" width="2.5" height="9" fill="#f8f4f8"/>
<path d="M1.5 5 H16.5 M1.5 8.5 H16.5 M1.5 12 H16.5 M5 1.5 V14.5 M8.8 1.5 V14.5 M12.5 1.5 V14.5" stroke="#bdbdbd" stroke-width="0.9"/>
<path d="M3 18.5 Q4.5 12 9.5 10 L13 13.5 Q11 18 3 18.5 Z" fill="#f3f3f3"/>
<path d="M17.5 3 L19 3 L19 8 L13 14.5 L11 12.5 Z" fill="#f3f3f3"/>
<path d="M4.5 17.8 Q5.5 13.5 9.5 11.5 L11.8 13.8 Q10.5 17 4.5 17.8 Z" fill="#ababab"/>
<path d="M10.5 11 L17 4 L17 7.5 L12.3 12.8 Z" fill="#ababab"/>
<path d="M8.5 14.5 Q9.5 13.8 10 15" stroke="#f3f3f3" stroke-width="0.8" fill="none"/>
</svg>
<svg style="left:606px;top:116px" width="19" height="19">
<rect x="1.5" y="1.5" width="15" height="13" fill="#dcd8dc" stroke="#ababab" stroke-width="1.2"/>
<rect x="2.5" y="2.5" width="13" height="2.5" fill="#f8f4f8"/>
<rect x="2.5" y="5" width="2.5" height="9" fill="#f8f4f8"/>
<path d="M1.5 5 H16.5 M1.5 8.5 H16.5 M1.5 12 H16.5 M5 1.5 V14.5 M8.8 1.5 V14.5 M12.5 1.5 V14.5" stroke="#bdbdbd" stroke-width="0.9"/>
<path d="M3 18.5 Q4.5 12 9.5 10 L13 13.5 Q11 18 3 18.5 Z" fill="#f3f3f3"/>
<path d="M17.5 3 L19 3 L19 8 L13 14.5 L11 12.5 Z" fill="#f3f3f3"/>
<path d="M4.5 17.8 Q5.5 13.5 9.5 11.5 L11.8 13.8 Q10.5 17 4.5 17.8 Z" fill="#ababab"/>
<path d="M10.5 11 L17 4 L17 7.5 L12.3 12.8 Z" fill="#ababab"/>
<path d="M8.5 14.5 Q9.5 13.8 10 15" stroke="#f3f3f3" stroke-width="0.8" fill="none"/>
</svg>
<svg style="left:752px;top:77px" width="8" height="5"><polygon points="1,1 6,1 3.5,3.8" fill="#b8b8b8"/></svg>
<svg style="left:711px;top:100px" width="8" height="5"><polygon points="1,1 6,1 3.5,3.8" fill="#b8b8b8"/></svg>
<svg style="left:682px;top:123px" width="8" height="5"><polygon points="1,1 6,1 3.5,3.8" fill="#b8b8b8"/></svg>
<svg style="left:776px;top:70px" width="19" height="18">
<rect x="1.5" y="1.5" width="8.5" height="3.5" fill="#f6f1f6" stroke="#ababab" stroke-width="1.2"/><path d="M5.8 1.5 V5" stroke="#ababab"/>
<rect x="1.5" y="10.5" width="8.5" height="6.5" fill="#f6f1f6" stroke="#ababab" stroke-width="1.2"/><path d="M5.8 10.5 V17 M1.5 13.7 H10" stroke="#ababab"/>
<rect x="8.5" y="6.5" width="8.5" height="3.5" fill="#f6f1f6" stroke="#ababab" stroke-width="1.2"/><path d="M12.8 6.5 V10" stroke="#ababab"/>
<path d="M7.5 8.2 H2 M4.5 5.5 L1.8 8.2 L4.5 11" fill="none" stroke="#ababab" stroke-width="1.6"/>
</svg>
<svg style="left:776px;top:93px" width="19" height="18">
<rect x="1.5" y="1.5" width="8.5" height="3.5" fill="#f6f1f6" stroke="#ababab" stroke-width="1.2"/><path d="M5.8 1.5 V5" stroke="#ababab"/>
<rect x="1.5" y="10.5" width="8.5" height="6.5" fill="#f6f1f6" stroke="#ababab" stroke-width="1.2"/><path d="M5.8 10.5 V17 M1.5 13.7 H10" stroke="#ababab"/>
<rect x="4.5" y="6.5" width="4" height="3" fill="#d8d4d8" stroke="#ababab" stroke-width="1"/>
<path d="M10.5 4.5 L16.5 10.5 M16.5 4.5 L10.5 10.5" stroke="#ababab" stroke-width="1.2"/>
</svg>
<svg style="left:776px;top:116px" width="19" height="18">
<path d="M1.5 1 V4 M14.5 1 V4 M2.5 2.5 H13.5 M4.5 1 L2.5 2.5 L4.5 4 M11.5 1 L13.5 2.5 L11.5 4" fill="none" stroke="#2e72b8" stroke-width="1"/>
<rect x="1.5" y="5.5" width="14" height="10" fill="#fff" stroke="#666" stroke-width="1.1"/>
<path d="M1.5 8.5 H15.5 M1.5 12 H15.5 M5 5.5 V15.5 M9.5 5.5 V15.5 M13 5.5 V15.5" stroke="#9a9a9a" stroke-width="0.8"/>
<rect x="4.5" y="8.5" width="5" height="3.5" fill="#2e72b8"/>
<path d="M1.5 15.5 V17 H7 M8 17 H14" stroke="#666" stroke-width="1.1" fill="none"/>
</svg>
<svg style="left:834px;top:77px" width="8" height="5"><polygon points="1,1 6,1 3.5,3.8" fill="#c0c0c0"/></svg>
<svg style="left:838px;top:100px" width="8" height="5"><polygon points="1,1 6,1 3.5,3.8" fill="#c0c0c0"/></svg>
<svg style="left:836px;top:123px" width="8" height="5"><polygon points="1,1 6,1 3.5,3.8" fill="#555"/></svg>
<svg style="left:860px;top:70px" width="18" height="17">
<path d="M15.5 3.5 V1.5 H2 L8.5 8.5 L2 15.5 H15.5 V13.5" fill="none" stroke="#3f3f3f" stroke-width="2.2" stroke-linejoin="miter"/>
</svg>
<svg style="left:882px;top:77px" width="8" height="5"><polygon points="1,1 6,1 3.5,3.8" fill="#444"/></svg>
<svg style="left:861px;top:93px" width="17" height="18">
<rect x="1.5" y="1.5" width="14" height="15.5" fill="#f6f1f6" stroke="#ababab" stroke-width="1.2"/>
<rect x="1.5" y="1.5" width="14" height="3" fill="#ababab"/>
<path d="M8.5 6.5 V14 M5 10.5 L8.5 14 L12 10.5" fill="none" stroke="#a0a0a0" stroke-width="1.8"/>
</svg>
<svg style="left:880px;top:100px" width="8" height="5"><polygon points="1,1 6,1 3.5,3.8" fill="#c0c0c0"/></svg>
<svg style="left:861px;top:117px" width="16" height="15">
<path d="M1.5 10 L9.5 2 L14.5 6 L6.5 14 Z" fill="#e8728c"/>
<path d="M3.3 8 L7.8 12.3" stroke="#f3f3f3" stroke-width="1"/>
</svg>
<svg style="left:880px;top:123px" width="8" height="5"><polygon points="1,1 6,1 3.5,4" fill="#444"/></svg>
<svg style="left:910px;top:80px" width="20" height="17">
<path d="M1 1 H18 L11 8.5 V15.5 H8 V8.5 Z" fill="#ababab"/>
<path d="M3.5 2 L9 8 V15" fill="none" stroke="#f6f6f6" stroke-width="1"/>
</svg>
<svg style="left:925px;top:127px" width="8" height="5"><polygon points="1,1 6,1 3.5,3.8" fill="#c0c0c0"/></svg>
<svg style="left:941px;top:71px" width="32" height="30">
<circle cx="19" cy="12" r="8.6" fill="#fff" stroke="#2e72b8" stroke-width="2.2"/>
<path d="M12.8 18.3 L4.5 26.3" stroke="#2e72b8" stroke-width="3.2" stroke-linecap="round"/>
</svg>
<svg style="left:970px;top:127px" width="8" height="5"><polygon points="1,1 6,1 3.5,3.8" fill="#444"/></svg>
<svg style="left:999px;top:145px" width="11" height="8"><path d="M1.5 6.5 L5.5 2.5 L9.5 6.5" fill="none" stroke="#555" stroke-width="1.6"/></svg>
<svg style="left:92px;top:177px" width="10" height="6"><polygon points="1,1 9,1 5.0,5" fill="#777"/></svg>
<svg style="left:150px;top:175px" width="14" height="13"><path d="M2 1.5 L12 11.5 M12 1.5 L2 11.5" stroke="#808080" stroke-width="1.5"/></svg>
<svg style="left:185px;top:175px" width="17" height="13"><path d="M2 6.5 L6.5 11 L15.5 1.8" fill="none" stroke="#808080" stroke-width="2.1"/></svg>
<svg style="left:220px;top:172px" width="18" height="18"><path d="M12 3.6 Q10.5 2.2 9 3.5 Q8 4.5 7.6 6.5 L5.8 13.5 Q5 15.5 3 14.2" fill="none" stroke="#6a6a6a" stroke-width="1.5"/><path d="M5.5 6.8 H10.5" stroke="#6a6a6a" stroke-width="1.1"/><path d="M8.8 8.5 Q10.5 8.3 11.2 10.5 L12 12.3 Q12.6 13.2 14 12.6 M14.2 8.4 Q13 8.6 11.8 10.3 L10.5 12 Q9.5 13.2 8.5 12.7" fill="none" stroke="#6a6a6a" stroke-width="1.1"/></svg>
<svg style="left:1001px;top:177px" width="10" height="8"><path d="M1.5 1.5 L5 5.3 L8.5 1.5" fill="none" stroke="#666" stroke-width="1.8"/></svg>
<svg style="left:11px;top:207px" width="13" height="14"><polygon points="0.5,13 12,1 12,13" fill="#b5b5b5"/></svg>
<svg style="left:1003px;top:210px" width="11" height="7"><polygon points="1.5,5.5 9.5,5.5 5.5,1" fill="#777"/></svg>
<svg style="left:1003px;top:472px" width="11" height="7"><polygon points="1.5,1 9.5,1 5.5,5.5" fill="#777"/></svg>
<svg style="left:27px;top:490px" width="7" height="11"><polygon points="5.5,1.5 1.5,5.5 5.5,9.5" fill="#b8b8b8"/></svg>
<svg style="left:55px;top:490px" width="7" height="11"><polygon points="1.5,1.5 5.5,5.5 1.5,9.5" fill="#b8b8b8"/></svg>
<svg style="left:247px;top:489px" width="17" height="16"><circle cx="8.3" cy="7.8" r="7" fill="none" stroke="#7a7a7a" stroke-width="1.2"/><path d="M8.3 4 V11.6 M4.5 7.8 H12.1" stroke="#7a7a7a" stroke-width="1.8"/></svg>
<svg style="left:632px;top:491px" width="9" height="11"><polygon points="6.5,1.5 2.5,5.5 6.5,9.5" fill="#666"/></svg>
<svg style="left:988px;top:491px" width="9" height="11"><polygon points="2.5,1.5 6.5,5.5 2.5,9.5" fill="#666"/></svg>
<svg style="left:58px;top:513px" width="16" height="15">
<circle cx="3.9" cy="4" r="2.9" fill="#555"/>
<path d="M2.7 8 V13.2 H13.5 V2.5" fill="none" stroke="#555" stroke-width="1.1"/>
<rect x="8.2" y="2" width="5.9" height="2.7" fill="#555"/>
<rect x="8" y="7" width="1.6" height="1" rx="0.4" fill="#555"/><rect x="11" y="7" width="1.6" height="1" rx="0.4" fill="#555"/><rect x="5" y="9.3" width="1.6" height="1" rx="0.4" fill="#555"/><rect x="8" y="9.3" width="1.6" height="1" rx="0.4" fill="#555"/><rect x="11" y="9.3" width="1.6" height="1" rx="0.4" fill="#555"/><rect x="5" y="11.3" width="1.6" height="1" rx="0.4" fill="#555"/><rect x="8" y="11.3" width="1.6" height="1" rx="0.4" fill="#555"/><rect x="11" y="11.3" width="1.6" height="1" rx="0.4" fill="#555"/>
</svg>
<svg style="left:733px;top:513px" width="16" height="15">
<rect x="1.5" y="1.5" width="13" height="12" fill="none" stroke="#666" stroke-width="1.2"/>
<path d="M1.5 5.5 H14.5 M1.5 9.5 H14.5 M5.5 1.5 V13.5 M10.5 1.5 V13.5" stroke="#666" stroke-width="1.1"/>
</svg>
<svg style="left:771px;top:513px" width="16" height="15">
<rect x="1.5" y="1.5" width="13" height="12" fill="none" stroke="#666" stroke-width="1.1"/>
<rect x="4.5" y="3.5" width="7" height="8" fill="none" stroke="#666" stroke-width="1"/>
<path d="M6 5.5 H10 M6 7.5 H10 M6 9.5 H10" stroke="#666" stroke-width="1"/>
</svg>
<svg style="left:809px;top:513px" width="16" height="15">
<rect x="1.5" y="1.5" width="13" height="12" fill="none" stroke="#666" stroke-width="1.1"/>
<path d="M1.5 8.5 H9.5 V1.5 M5.5 1.5 V8.5" fill="none" stroke="#666" stroke-width="1.1"/>
</svg>
</body></html>
